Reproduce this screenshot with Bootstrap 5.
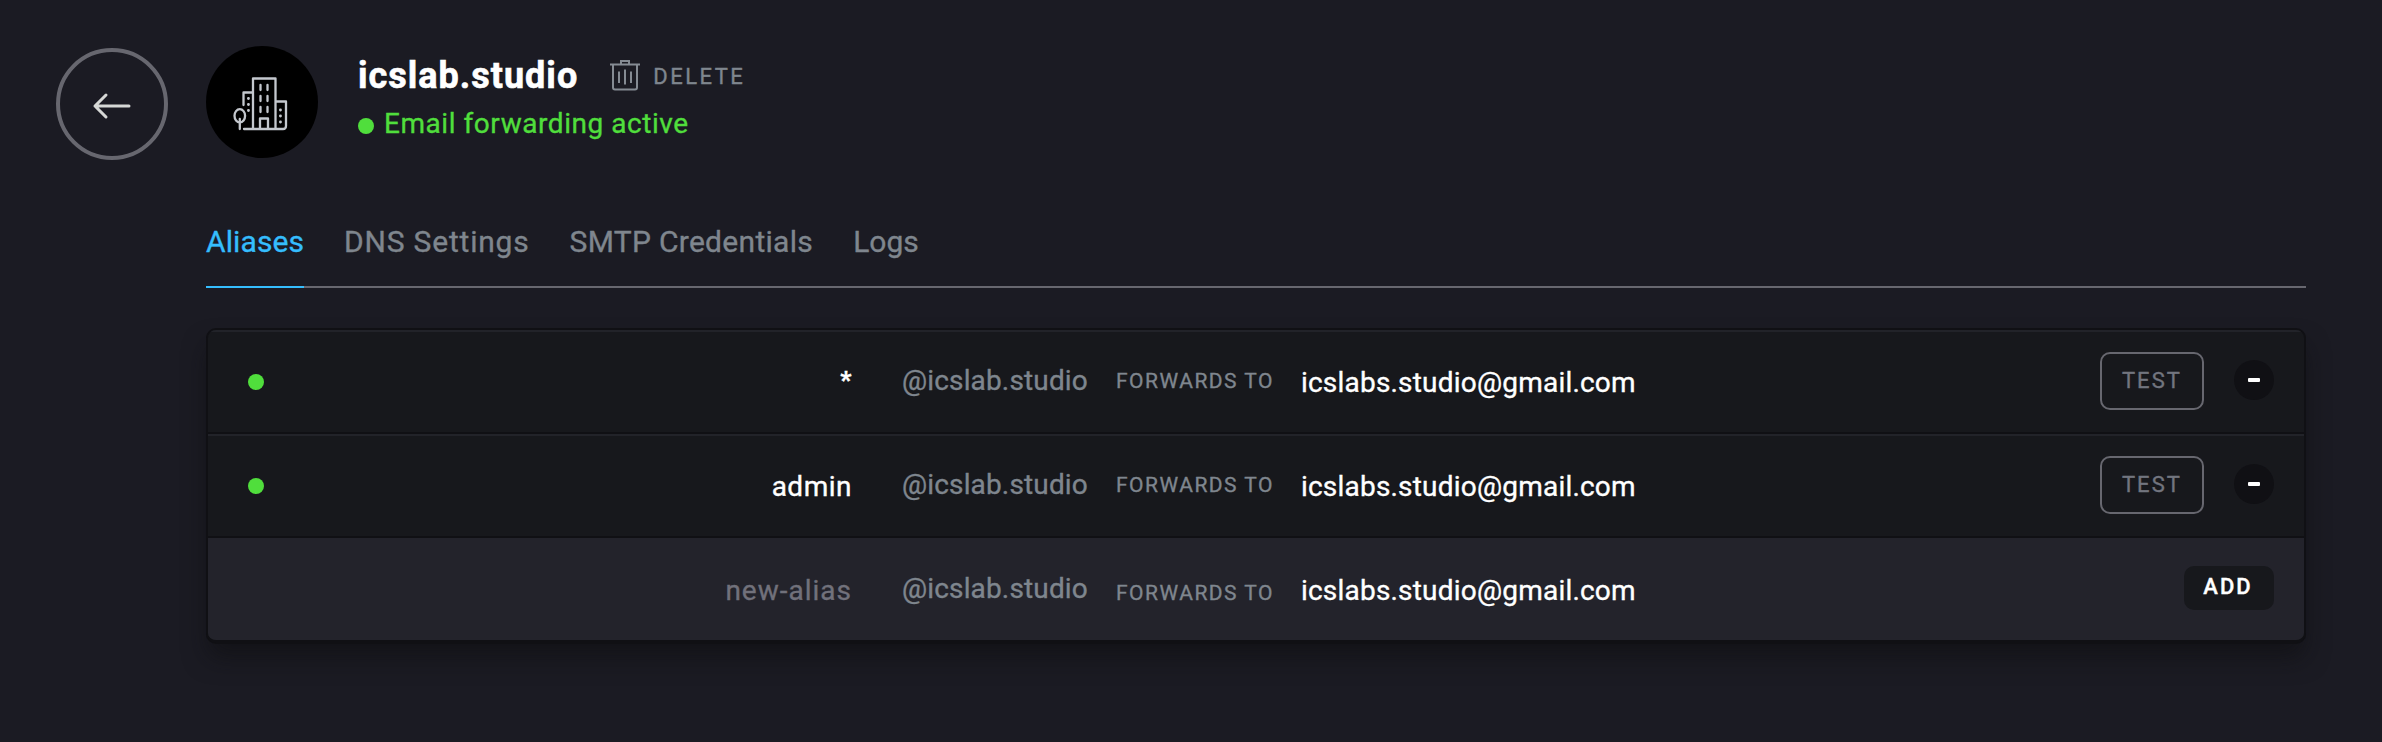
<!DOCTYPE html>
<html lang="en">
<head>
<meta charset="utf-8">
<meta name="viewport" content="width=device-width, initial-scale=1">
<title>icslab.studio</title>
<link href="https://cdn.jsdelivr.net/npm/bootstrap@5.3.0/dist/css/bootstrap.min.css" rel="stylesheet">
<style>
body{background:#1b1b23;color:#fff;font-family:Roboto,sans-serif;font-size:28px;line-height:36px;min-height:742px;overflow:hidden;-webkit-text-stroke:.35px}
.page{padding:46px 76px 0 56px}
.back{width:112px;height:112px;border:4px solid #67676f;margin:2px 38px 0 0;background:none}
.logo{width:112px;height:112px;background:#000;margin-right:40px}
.back svg,.logo svg,.del svg{display:block}
.title{font-size:36px;font-weight:700;line-height:44px;letter-spacing:1px;margin:8px 0 0;-webkit-text-stroke:.6px}
.caps{font-size:22px;letter-spacing:2.5px;color:#7f868e}
.del{margin:13px 0 0 31px;gap:12px;line-height:36px}
.status{color:#50de3c;font-size:28px;letter-spacing:.55px;line-height:36px;margin-top:8px;gap:9px}
.status .dot{margin:3px 1px 0 0}
.dot{width:16px;height:16px;background:#50de3c;flex:none}
.tabs{margin:45px 0 0 150px;border-bottom:2px solid #67676f;height:83px;gap:40px;font-size:30px}
.tabs a{height:83px;padding:18px 0 0;margin-bottom:-2px;color:#7f868e;text-decoration:none;white-space:nowrap;border-bottom:2px solid transparent;line-height:38px}
.tabs a.on{color:#35bdfd;border-color:#35bdfd}
.aliases{margin:40px 0 0 150px;border:2px solid #101014;border-bottom-width:3px;border-radius:10px;background:#17181c;overflow:hidden;box-shadow:0 1px 0 #101014,0 16px 24px -2px rgba(12,12,15,.55)}
.entry{height:104px;padding:0 30px 0 40px;border-top:2px solid #222329;border-bottom:2px solid #101014}
.entry.fresh{height:102px;border:0;background:#23232b}
.who{width:588px;text-align:right;letter-spacing:.5px;padding-top:1px}
.who.star{font-size:24px;font-weight:900;padding:0 0 5px}
.dom{width:214px;margin-left:50px;padding-bottom:3px;color:#7f868e;letter-spacing:.15px}
.fwd{width:185px;font-size:21px;letter-spacing:1.5px;color:#7f868e;padding-bottom:2px}
.mail{letter-spacing:.2px;padding-top:1px}
.test{width:104px;height:58px;border:2px solid #67676f;border-radius:10px;background:none;color:#72757f;font-size:22px;letter-spacing:2.1px;padding:0;line-height:30px;margin-bottom:2px}
.minus{width:40px;height:40px;background:#101014;border:0;padding:0;margin:0 0 4px 30px}
.minus i{width:12px;height:4px;border-radius:1px;background:#fff}
.add{width:90px;height:44px;border:0;border-radius:10px;background:#17181c;color:#fff;font-weight:500;font-size:22px;letter-spacing:2px;padding:0 2px 3px 0;line-height:30px;margin-bottom:2px}
.fresh .who,.fresh .mail{padding-top:3px}
.fresh .dom{padding:0 0 1px}
.fresh .fwd{padding:7px 0 0}
</style>
</head>
<body>
<main class="page">
  <header class="d-flex align-items-start" style="height:114px">
    <button class="back rounded-circle d-flex align-items-center justify-content-center p-0" aria-label="Back">
      <svg width="40" height="28" viewBox="0 0 40 28" fill="none" stroke="#d6d8d6" stroke-width="3" stroke-linecap="round" stroke-linejoin="round" style="margin-top:4px"><path d="M37 14H3M14 3 3 14l11 11"/></svg>
    </button>
    <div class="logo rounded-circle">
      <svg width="112" height="112" viewBox="206 46 112 112" fill="none" stroke="#c4c8ce" stroke-width="2.300" stroke-linecap="round" stroke-linejoin="round">
        <path d="M253 128.500V78.500h22.500v50M252.500 92.500h-9V105M275.500 101.500h10.500v24.500q0 3-3 3H244M260 128.500V118.500h8v10"/>
        <path d="M260.500 85v5M267.500 85v5M260.500 96v5M267.500 96v5M260.500 107v5M267.500 107v5"/>
        <ellipse cx="239.800" cy="115.800" rx="5.300" ry="6.600"/><path d="M239.800 119v10"/>
        <path stroke-width="2.800" d="M248.400 98.500h.1M248.400 104.500h.1M248.400 110.500h.1M280.400 110h.1M280.400 116h.1M280.400 122h.1"/>
      </svg>
    </div>
    <div>
      <div class="d-flex align-items-start">
        <h1 class="title">icslab.studio</h1>
        <a class="del caps d-flex align-items-center text-decoration-none" href="#">
          <svg width="32" height="32" viewBox="0 0 32 32" fill="none" stroke="#858b93" stroke-width="2" style="margin-top:-4px"><path d="M1 5.500h30M4 5.500v23q0 2 2 2h20q2 0 2-2v-23M12 5V2h8v3M10 12.500v11.500M16 10.500v15M22 12.500v11.500"/></svg>
          <span>DELETE</span>
        </a>
      </div>
      <div class="status d-flex align-items-center"><span class="dot rounded-circle"></span><span>Email forwarding active</span></div>
    </div>
  </header>
  <nav class="tabs d-flex">
    <a class="on" href="#" style="letter-spacing:.1px">Aliases</a>
    <a href="#" style="letter-spacing:.8px">DNS Settings</a>
    <a href="#" style="letter-spacing:.3px">SMTP Credentials</a>
    <a href="#">Logs</a>
  </nav>
  <section class="aliases">
    <div class="entry d-flex align-items-center">
      <span class="dot rounded-circle"></span><span class="who star">*</span><span class="dom">@icslab.studio</span><span class="fwd">FORWARDS TO</span><span class="mail">icslabs.studio@gmail.com</span>
      <button class="test ms-auto">TEST</button><button class="minus rounded-circle d-flex align-items-center justify-content-center" aria-label="Remove"><i></i></button>
    </div>
    <div class="entry d-flex align-items-center">
      <span class="dot rounded-circle"></span><span class="who">admin</span><span class="dom">@icslab.studio</span><span class="fwd">FORWARDS TO</span><span class="mail">icslabs.studio@gmail.com</span>
      <button class="test ms-auto">TEST</button><button class="minus rounded-circle d-flex align-items-center justify-content-center" aria-label="Remove"><i></i></button>
    </div>
    <div class="entry fresh d-flex align-items-center">
      <span class="dot invisible"></span><span class="who" style="color:#71717b;letter-spacing:1px">new-alias</span><span class="dom">@icslab.studio</span><span class="fwd">FORWARDS TO</span><span class="mail">icslabs.studio@gmail.com</span>
      <button class="add ms-auto">ADD</button>
    </div>
  </section>
</main>
<script src="https://cdn.jsdelivr.net/npm/bootstrap@5.3.0/dist/js/bootstrap.bundle.min.js"></script>
</body>
</html>
